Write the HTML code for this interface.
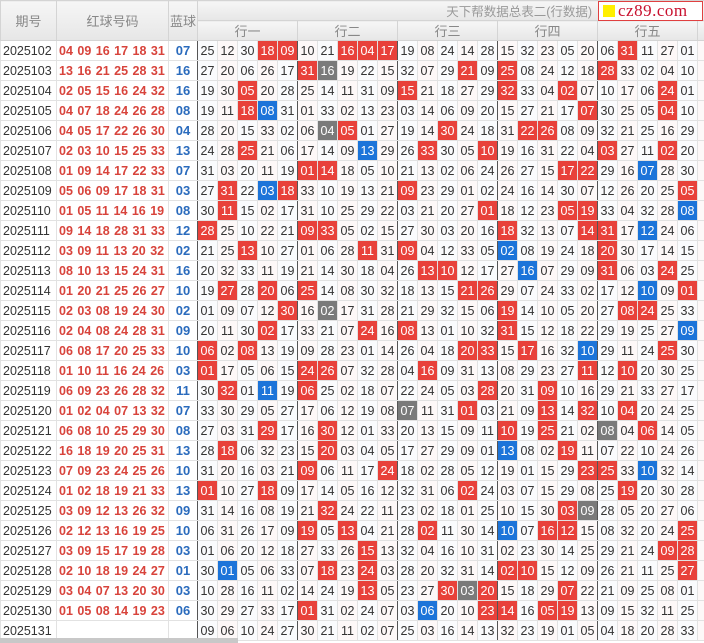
<!DOCTYPE html>
<html><head><meta charset="utf-8">
<style>
*{margin:0;padding:0;box-sizing:border-box}
body{width:704px;height:643px;overflow:hidden;background:#fff;font-family:"Liberation Sans","Noto Sans CJK SC",sans-serif;position:relative}
table{border-collapse:collapse;table-layout:fixed;width:704px;position:absolute;left:0;top:0}
td{height:20px;border:1px solid #e2e2e2;text-align:center;font-size:12.5px;color:#333;padding:0;white-space:nowrap;overflow:hidden;background:#fafbfd}
tr.d td:nth-child(n+4):nth-child(odd){background:#fdf8f8}
.p{text-align:left;padding-left:2px;background:#fff!important;color:#333;font-size:12.5px}
.h{color:#d8433b;font-weight:bold;font-size:12.5px;text-align:left;padding-left:2px;background:#fff!important;word-spacing:1px}
.bl{color:#2a6bbd;font-weight:bold;font-size:13px;background:#fff!important}
tr.d td:nth-child(3),tr.d td:nth-child(8),tr.d td:nth-child(13),tr.d td:nth-child(18),tr.d td:nth-child(23){border-right:1.5px solid #555}
tr td.r{background:#e8413a!important;color:#fff}
tr td.b{background:#1c74d9!important;color:#fff}
tr td.g{background:#7a7a7a!important;color:#fff}
.hd{background:linear-gradient(#f6f6f6,#e6e6e6);color:#888;font-size:13px;border-color:#d4d4d4}
.t{text-align:right;padding-right:112px;color:#999;font-size:12.5px;height:18px}
.sb{position:absolute;left:0;top:638px;width:238px;height:5px;background:#c8c8c8}
.logo{position:absolute;left:598px;top:1px;width:105px;height:20px;background:#fff;border:1px solid #e04040;display:flex;align-items:center}
.logo i{display:inline-block;width:12px;height:12px;background:#ffef00;margin:0 3px 0 4px}
.logo span{font-family:"Liberation Serif",serif;color:#c8102e;font-size:17px;letter-spacing:0.5px}
</style></head><body>
<table>
<colgroup><col style="width:56px"><col style="width:112px"><col style="width:29px">
<col style="width:20px"><col style="width:20px"><col style="width:20px"><col style="width:20px"><col style="width:20px">
<col style="width:20px"><col style="width:20px"><col style="width:20px"><col style="width:20px"><col style="width:20px">
<col style="width:20px"><col style="width:20px"><col style="width:20px"><col style="width:20px"><col style="width:20px">
<col style="width:20px"><col style="width:20px"><col style="width:20px"><col style="width:20px"><col style="width:20px">
<col style="width:20px"><col style="width:20px"><col style="width:20px"><col style="width:20px"><col style="width:20px">
<col style="width:7px"></colgroup>
<tr><td rowspan=2 class=hd style="height:37px">期号</td><td rowspan=2 class=hd>红球号码</td><td rowspan=2 class=hd>蓝球</td><td colspan=26 class="hd t" style="height:19px">天下帮数据总表二(行数据)</td></tr>
<tr><td colspan=5 class=hd style="height:18px">行一</td><td colspan=5 class=hd>行二</td><td colspan=5 class=hd>行三</td><td colspan=5 class=hd>行四</td><td colspan=5 class=hd>行五</td><td class=hd></td></tr>
<tr class=d><td class=p>2025102<td class=h>04 09 16 17 18 31<td class=bl>07<td>25<td>12<td>30<td class=r>18<td class=r>09<td>10<td>21<td class=r>16<td class=r>04<td class=r>17<td>19<td>08<td>24<td>14<td>28<td>15<td>32<td>23<td>05<td>20<td>06<td class=r>31<td>11<td>27<td>01<td></tr>
<tr class=d><td class=p>2025103<td class=h>13 16 21 25 28 31<td class=bl>16<td>27<td>20<td>06<td>26<td>17<td class=r>31<td class=g>16<td>19<td>22<td>15<td>32<td>07<td>29<td class=r>21<td>09<td class=r>25<td>08<td>24<td>12<td>18<td class=r>28<td>33<td>02<td>04<td>10<td></tr>
<tr class=d><td class=p>2025104<td class=h>02 05 15 16 24 32<td class=bl>16<td>19<td>30<td class=r>05<td>20<td>28<td>25<td>14<td>11<td>31<td>09<td class=r>15<td>21<td>18<td>27<td>29<td class=r>32<td>33<td>04<td class=r>02<td>07<td>10<td>17<td>06<td class=r>24<td>01<td></tr>
<tr class=d><td class=p>2025105<td class=h>04 07 18 24 26 28<td class=bl>08<td>19<td>11<td class=r>18<td class=b>08<td>31<td>01<td>33<td>02<td>13<td>23<td>03<td>14<td>06<td>09<td>20<td>15<td>27<td>21<td>17<td class=r>07<td>30<td>25<td>05<td class=r>04<td>10<td></tr>
<tr class=d><td class=p>2025106<td class=h>04 05 17 22 26 30<td class=bl>04<td>28<td>20<td>15<td>33<td>02<td>06<td class=g>04<td class=r>05<td>01<td>27<td>19<td>14<td class=r>30<td>24<td>18<td>31<td class=r>22<td class=r>26<td>08<td>09<td>32<td>21<td>25<td>16<td>29<td></tr>
<tr class=d><td class=p>2025107<td class=h>02 03 10 15 25 33<td class=bl>13<td>24<td>28<td class=r>25<td>21<td>06<td>17<td>14<td>09<td class=b>13<td>29<td>26<td class=r>33<td>30<td>05<td class=r>10<td>19<td>16<td>31<td>22<td>04<td class=r>03<td>27<td>11<td class=r>02<td>20<td></tr>
<tr class=d><td class=p>2025108<td class=h>01 09 14 17 22 33<td class=bl>07<td>31<td>03<td>20<td>11<td>19<td class=r>01<td class=r>14<td>18<td>05<td>10<td>21<td>13<td>02<td>06<td>24<td>26<td>27<td>15<td class=r>17<td class=r>22<td>29<td>16<td class=b>07<td>28<td>30<td></tr>
<tr class=d><td class=p>2025109<td class=h>05 06 09 17 18 31<td class=bl>03<td>27<td class=r>31<td>22<td class=b>03<td class=r>18<td>33<td>10<td>19<td>13<td>21<td class=r>09<td>23<td>29<td>01<td>02<td>24<td>16<td>14<td>30<td>07<td>12<td>26<td>20<td>25<td class=r>05<td></tr>
<tr class=d><td class=p>2025110<td class=h>01 05 11 14 16 19<td class=bl>08<td>30<td class=r>11<td>15<td>02<td>17<td>31<td>10<td>25<td>29<td>22<td>03<td>21<td>20<td>27<td class=r>01<td>18<td>12<td>23<td class=r>05<td class=r>19<td>33<td>04<td>32<td>28<td class=b>08<td></tr>
<tr class=d><td class=p>2025111<td class=h>09 14 18 28 31 33<td class=bl>12<td class=r>28<td>25<td>10<td>22<td>21<td class=r>09<td class=r>33<td>05<td>02<td>15<td>27<td>30<td>03<td>20<td>16<td class=r>18<td>32<td>13<td>07<td class=r>14<td class=r>31<td>17<td class=b>12<td>24<td>06<td></tr>
<tr class=d><td class=p>2025112<td class=h>03 09 11 13 20 32<td class=bl>02<td>21<td>25<td class=r>13<td>10<td>27<td>01<td>06<td>28<td class=r>11<td>31<td class=r>09<td>04<td>12<td>33<td>05<td class=b>02<td>08<td>19<td>24<td>18<td class=r>20<td>30<td>17<td>14<td>15<td></tr>
<tr class=d><td class=p>2025113<td class=h>08 10 13 15 24 31<td class=bl>16<td>20<td>32<td>33<td>11<td>19<td>21<td>14<td>30<td>18<td>04<td>26<td class=r>13<td class=r>10<td>12<td>17<td>27<td class=b>16<td>07<td>29<td>09<td class=r>31<td>06<td>03<td class=r>24<td>25<td></tr>
<tr class=d><td class=p>2025114<td class=h>01 20 21 25 26 27<td class=bl>10<td>19<td class=r>27<td>28<td class=r>20<td>06<td class=r>25<td>14<td>08<td>30<td>32<td>18<td>13<td>15<td class=r>21<td class=r>26<td>29<td>07<td>24<td>33<td>02<td>17<td>12<td class=b>10<td>09<td class=r>01<td></tr>
<tr class=d><td class=p>2025115<td class=h>02 03 08 19 24 30<td class=bl>02<td>01<td>09<td>07<td>12<td class=r>30<td>16<td class=g>02<td>17<td>31<td>28<td>21<td>29<td>32<td>15<td>06<td class=r>19<td>14<td>10<td>05<td>20<td>27<td class=r>08<td class=r>24<td>25<td>33<td></tr>
<tr class=d><td class=p>2025116<td class=h>02 04 08 24 28 31<td class=bl>09<td>20<td>11<td>30<td class=r>02<td>17<td>33<td>21<td>07<td class=r>24<td>16<td class=r>08<td>13<td>01<td>10<td>32<td class=r>31<td>15<td>12<td>18<td>22<td>29<td>19<td>25<td>27<td class=b>09<td></tr>
<tr class=d><td class=p>2025117<td class=h>06 08 17 20 25 33<td class=bl>10<td class=r>06<td>02<td class=r>08<td>13<td>19<td>09<td>28<td>23<td>01<td>14<td>26<td>04<td>18<td class=r>20<td class=r>33<td>15<td class=r>17<td>16<td>32<td class=b>10<td>29<td>11<td>24<td class=r>25<td>30<td></tr>
<tr class=d><td class=p>2025118<td class=h>01 10 11 16 24 26<td class=bl>03<td class=r>01<td>17<td>05<td>06<td>15<td class=r>24<td class=r>26<td>07<td>32<td>28<td>04<td class=r>16<td>09<td>31<td>13<td>08<td>29<td>23<td>27<td class=r>11<td>12<td class=r>10<td>20<td>30<td>25<td></tr>
<tr class=d><td class=p>2025119<td class=h>06 09 23 26 28 32<td class=bl>11<td>30<td class=r>32<td>01<td class=b>11<td>19<td class=r>06<td>25<td>02<td>18<td>07<td>22<td>24<td>05<td>03<td class=r>28<td>20<td>31<td class=r>09<td>10<td>16<td>29<td>21<td>33<td>27<td>17<td></tr>
<tr class=d><td class=p>2025120<td class=h>01 02 04 07 13 32<td class=bl>07<td>33<td>30<td>29<td>05<td>27<td>17<td>06<td>12<td>19<td>08<td class=g>07<td>11<td>31<td class=r>01<td>03<td>21<td>09<td class=r>13<td>14<td class=r>32<td>10<td class=r>04<td>20<td>24<td>25<td></tr>
<tr class=d><td class=p>2025121<td class=h>06 08 10 25 29 30<td class=bl>08<td>27<td>03<td>31<td class=r>29<td>17<td>16<td class=r>30<td>12<td>01<td>33<td>20<td>13<td>15<td>09<td>11<td class=r>10<td>19<td class=r>25<td>21<td>02<td class=g>08<td>04<td class=r>06<td>14<td>05<td></tr>
<tr class=d><td class=p>2025122<td class=h>16 18 19 20 25 31<td class=bl>13<td>28<td class=r>18<td>06<td>32<td>23<td>15<td class=r>20<td>03<td>04<td>05<td>17<td>27<td>29<td>09<td>01<td class=b>13<td>08<td>02<td class=r>19<td>11<td>07<td>22<td>10<td>24<td>26<td></tr>
<tr class=d><td class=p>2025123<td class=h>07 09 23 24 25 26<td class=bl>10<td>31<td>20<td>16<td>03<td>21<td class=r>09<td>06<td>11<td>17<td class=r>24<td>18<td>02<td>28<td>05<td>12<td>19<td>01<td>15<td>29<td class=r>23<td class=r>25<td>33<td class=b>10<td>32<td>14<td></tr>
<tr class=d><td class=p>2025124<td class=h>01 02 18 19 21 33<td class=bl>13<td class=r>01<td>10<td>27<td class=r>18<td>09<td>17<td>14<td>05<td>16<td>12<td>32<td>31<td>06<td class=r>02<td>24<td>03<td>07<td>15<td>29<td>08<td>25<td class=r>19<td>20<td>30<td>28<td></tr>
<tr class=d><td class=p>2025125<td class=h>03 09 12 13 26 32<td class=bl>09<td>31<td>14<td>16<td>08<td>19<td>21<td class=r>32<td>24<td>22<td>11<td>23<td>02<td>18<td>01<td>25<td>10<td>15<td>30<td class=r>03<td class=g>09<td>28<td>05<td>20<td>27<td>06<td></tr>
<tr class=d><td class=p>2025126<td class=h>02 12 13 16 19 25<td class=bl>10<td>06<td>31<td>26<td>17<td>09<td class=r>19<td>05<td class=r>13<td>04<td>21<td>28<td class=r>02<td>11<td>30<td>14<td class=b>10<td>07<td class=r>16<td class=r>12<td>15<td>08<td>32<td>20<td>24<td class=r>25<td></tr>
<tr class=d><td class=p>2025127<td class=h>03 09 15 17 19 28<td class=bl>03<td>01<td>06<td>20<td>12<td>18<td>27<td>33<td>26<td class=r>15<td>13<td>32<td>04<td>16<td>10<td>31<td>02<td>23<td>30<td>14<td>25<td>29<td>21<td>24<td class=r>09<td class=r>28<td></tr>
<tr class=d><td class=p>2025128<td class=h>02 10 18 19 24 27<td class=bl>01<td>30<td class=b>01<td>05<td>06<td>33<td>07<td class=r>18<td>23<td class=r>24<td>03<td>28<td>20<td>32<td>31<td>14<td class=r>02<td class=r>10<td>15<td>12<td>09<td>26<td>21<td>11<td>25<td class=r>27<td></tr>
<tr class=d><td class=p>2025129<td class=h>03 04 07 13 20 30<td class=bl>03<td>10<td>28<td>16<td>11<td>02<td>14<td>24<td>19<td class=r>13<td>05<td>23<td>27<td class=r>30<td class=g>03<td class=r>20<td>15<td>18<td>29<td class=r>07<td>22<td>21<td>09<td>25<td>08<td>01<td></tr>
<tr class=d><td class=p>2025130<td class=h>01 05 08 14 19 23<td class=bl>06<td>30<td>29<td>27<td>33<td>17<td class=r>01<td>31<td>02<td>24<td>07<td>03<td class=b>06<td>20<td>10<td class=r>23<td class=r>14<td>16<td class=r>05<td class=r>19<td>13<td>09<td>15<td>32<td>11<td>25<td></tr>
<tr class=d><td class=p>2025131<td class=h><td class=bl><td>09<td>06<td>10<td>24<td>27<td>30<td>21<td>11<td>02<td>07<td>25<td>03<td>16<td>14<td>13<td>32<td>23<td>19<td>01<td>05<td>04<td>18<td>20<td>28<td>33<td></tr>
</table>
<div class=logo><i></i><span>cz89.com</span></div>
<div class=sb></div>
</body></html>
